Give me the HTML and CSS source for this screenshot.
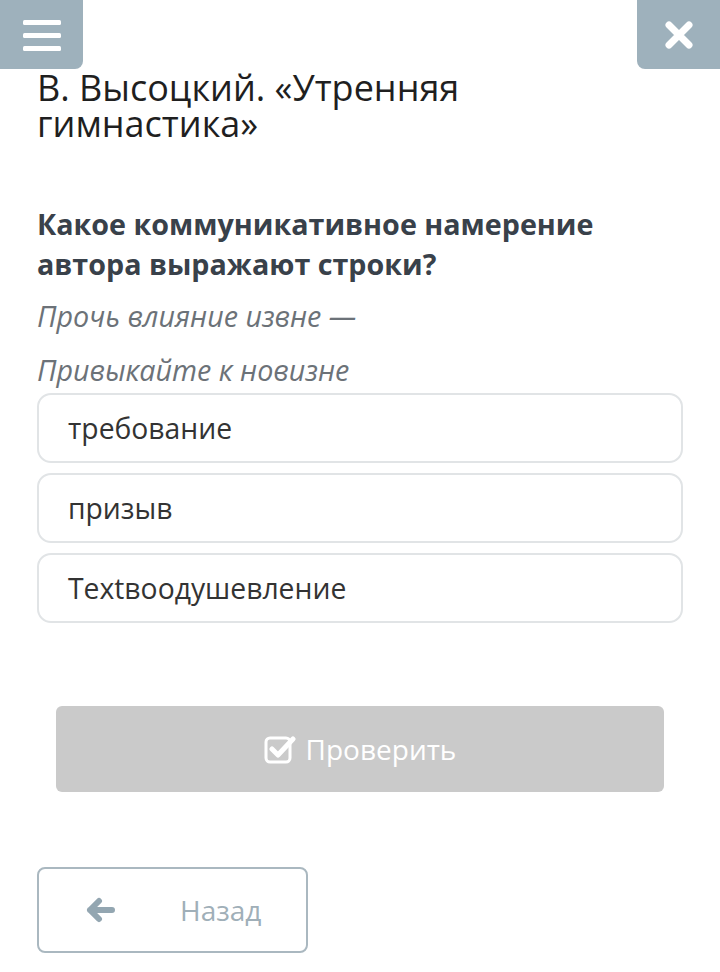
FILE: index.html
```html
<!DOCTYPE html>
<html lang="ru">
<head>
<meta charset="utf-8">
<link rel="stylesheet" href="styles.css">
</head>
<body>
<button class="corner-btn menu-btn" aria-label="Меню">
  <svg width="38" height="32" viewBox="0 0 38 32"><rect x="0" y="1" width="38" height="5" rx="1.5" fill="#fff"/><rect x="0" y="14" width="38" height="5" rx="1.5" fill="#fff"/><rect x="0" y="27" width="38" height="5" rx="1.5" fill="#fff"/></svg>
</button>
<button class="corner-btn close-btn" aria-label="Закрыть">
  <svg width="32" height="32" viewBox="0 0 32 32"><path d="M6 6 L26 26 M26 6 L6 26" stroke="#fff" stroke-width="7" stroke-linecap="round"/></svg>
</button>
<main class="page">
  <h1 class="title">В. Высоцкий. «Утренняя гимнастика»</h1>
  <h2 class="question">Какое коммуникативное намерение автора выражают строки?</h2>
  <p class="quote">Прочь влияние извне —</p>
  <p class="quote">Привыкайте к новизне</p>
  <div class="options">
    <div class="option">требование</div>
    <div class="option">призыв</div>
    <div class="option">Textвоодушевление</div>
  </div>
  <div class="check-wrap">
    <button class="check-btn">
      <svg class="check-icon" width="32" height="30" viewBox="0 0 32 30"><rect x="2" y="4" width="24" height="24" rx="4" fill="none" stroke="#fff" stroke-width="3"/><path d="M8 15 L14 21 L29 5" fill="none" stroke="#fff" stroke-width="5" stroke-linecap="round" stroke-linejoin="round"/></svg>
      <span>Проверить</span>
    </button>
  </div>
  <button class="back-btn">
    <svg width="30" height="26" viewBox="0 0 30 26"><path d="M4 13 H26 M13 4 L4 13 L13 22" fill="none" stroke="#93a6b1" stroke-width="6" stroke-linecap="round" stroke-linejoin="round"/></svg>
    <span>Назад</span>
  </button>
</main>
</body>
</html>
```
FILE: styles.css
```css
* { box-sizing: border-box; }
body {
  margin: 0;
  background: #fff;
  font-family: "Open Sans", "Noto Sans", sans-serif;
  width: 720px;
  height: 972px;
  overflow: hidden;
}
.corner-btn {
  position: absolute;
  top: 0;
  width: 83px;
  height: 69px;
  border: none;
  padding: 0;
  background: #9eb1bc;
  display: flex;
  align-items: center;
  justify-content: center;
}
.menu-btn { left: 0; border-bottom-right-radius: 8px; }
.close-btn { right: 0; border-bottom-left-radius: 8px; }
.page {
  padding: 70px 37px 0 37px;
}
.title {
  margin: 0;
  font-size: 36px;
  line-height: 36px;
  font-weight: 400;
  color: #1f1f1f;
}
.question {
  margin: 62px 0 0 0;
  font-size: 28.7px;
  line-height: 40px;
  font-weight: 700;
  color: #39414a;
}
.quote {
  margin: 8px 0 0 0;
  font-size: 28.7px;
  line-height: 47px;
  font-style: italic;
  font-weight: 400;
  color: #6c7278;
}
.quote + .quote { margin-top: 7px; }
.options {
  margin-top: 0;
  display: flex;
  flex-direction: column;
  gap: 10px;
}
.option {
  height: 70px;
  border: 2px solid #e1e4e6;
  border-radius: 14px;
  padding-left: 29px;
  display: flex;
  align-items: center;
  font-size: 28.3px;
  color: #333;
}
.check-wrap {
  padding: 0 19px;
  margin-top: 83px;
}
.check-btn {
  width: 100%;
  height: 86px;
  border: none;
  border-radius: 6px;
  background: #cacaca;
  color: #fff;
  font-family: inherit;
  font-size: 28px;
  display: flex;
  align-items: center;
  justify-content: center;
  gap: 10px;
}
.back-btn {
  margin-top: 75px;
  width: 271px;
  height: 86px;
  border: 2px solid #aab8c0;
  border-radius: 8px;
  background: #fff;
  font-family: inherit;
  font-size: 28px;
  color: #a0afb8;
  display: flex;
  align-items: center;
  padding: 0 0 0 47px;
  gap: 64px;
}
```
